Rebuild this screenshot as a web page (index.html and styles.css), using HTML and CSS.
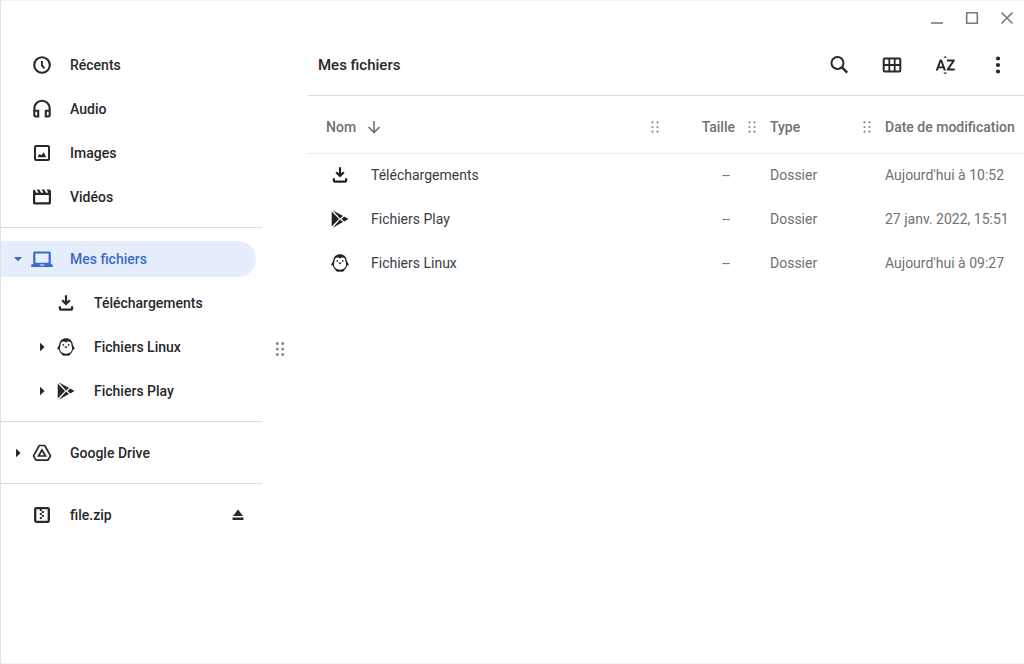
FILE: index.html
```html
<!DOCTYPE html>
<html lang="fr">
<head>
<meta charset="utf-8">
<title>Mes fichiers</title>
<link rel="stylesheet" href="styles.css">
</head>
<body>
<svg class="sprite" aria-hidden="true">
  <symbol id="clock" viewBox="0 0 24 24"><circle cx="12" cy="12" r="7.800" fill="none" stroke="currentColor" stroke-width="2.100"/><path d="M11.900 8v4.400l2.500 2.900" fill="none" stroke="currentColor" stroke-width="1.900"/></symbol>
  <symbol id="headphones" viewBox="0 0 24 24"><path d="M4.300 14v-2.500a7.700 7.700 0 0 1 15.400 0V14M4.300 13.800h3.900v5.700H6a1.700 1.700 0 0 1-1.700-1.700zM19.700 13.800h-3.900v5.700H18a1.700 1.700 0 0 0 1.700-1.700z" fill="none" stroke="currentColor" stroke-width="2.100"/></symbol>
  <symbol id="image" viewBox="0 0 24 24"><rect x="5" y="5" width="14" height="14" rx="1" fill="none" stroke="currentColor" stroke-width="2"/><path d="M8 16.200v-1.500l1.800-1.700 1.600 1.200 2.300-3 2.500 5z"/></symbol>
  <symbol id="film" viewBox="0 0 24 24"><path d="M4.500 4.500l1.700 3.300h2.300L6.800 4.500h2.600l1.700 3.300h2.300L11.700 4.500h2.600L16 7.800h2.300L16.600 4.500h2.600C20.200 4.500 21 5.300 21 6.300v11.400c0 1-.8 1.800-1.800 1.800H4.800c-1 0-1.800-.8-1.800-1.800V6.300C3 5.300 3.500 4.700 4.500 4.500zM5.200 10v7.300h13.600V10z" fill-rule="evenodd"/></symbol>
  <symbol id="laptop" viewBox="0 0 24 24"><path d="M4.700 4.500h14.600c.8 0 1.500.7 1.500 1.500v11.200h1.900V20H1.300v-2.800h1.900V6c0-.8.700-1.500 1.500-1.500zM5.400 6.500v9.200h13.200V6.500zM9.700 17.500v1h4.600v-1z" fill-rule="evenodd"/></symbol>
  <symbol id="download" viewBox="0 0 24 24"><path d="M12 4.300v8.200M8.200 9.200l3.800 3.800 3.800-3.800M5.900 15.300v2.400c0 .6.400 1 1 1h10.200c.6 0 1-.4 1-1v-2.400" fill="none" stroke="currentColor" stroke-width="2.200"/></symbol>
  <symbol id="penguin" viewBox="0 0 24 24"><path d="M12 3.300c-3.700 0-6.200 2.300-6.700 5.700-.2 1.800-1.700 3-2.300 5.300 1 0 1.600 0 2 .5.300 1.700 1.200 3.200 2.600 4.200.6 1.900 2.600 2 4.400 1.400 1.800.6 3.800.5 4.400-1.400 1.400-1 2.300-2.500 2.600-4.200.4-.5 1-.5 2-.5-.6-2.300-2.100-3.500-2.300-5.300C18.200 5.600 15.700 3.300 12 3.300zM9.500 6.500c1.100 0 2 .5 2.500 1.300.5-.8 1.400-1.300 2.500-1.300 2 0 3 1.600 3 3.700 0 1.200.6 1.900.6 3.300 0 3.100-2.500 5.200-6.100 5.200s-6.100-2.100-6.100-5.200c0-1.400.6-2.100.6-3.300 0-2.100 1-3.700 3-3.700z" fill-rule="evenodd"/><path d="M10.200 11.500h3.600L12 13.600z"/><circle cx="9.300" cy="9.800" r=".9"/><circle cx="14.700" cy="9.800" r=".9"/></symbol>
  <symbol id="play" viewBox="0 0 24 24"><path d="M3.700 4.500v15L11 12zM4.800 3.200L15 9l-3 2.500zM4.800 20.800L15 15l-3-2.500zM16.200 9.500l4.300 2.500-4.300 2.500L13.500 12z"/></symbol>
  <symbol id="drive" viewBox="0 0 24 24"><path d="M9.300 4.500h5.400l5.800 10.300-2.500 4.300H6l-2.500-4.300z" fill="none" stroke="currentColor" stroke-width="1.700" stroke-linejoin="round"/><path d="M12 9l3.500 6h-7z" fill="none" stroke="currentColor" stroke-width="1.700"/></symbol>
  <symbol id="zip" viewBox="0 0 24 24"><rect x="5.200" y="5.200" width="13.600" height="13.600" rx="1" fill="none" stroke="currentColor" stroke-width="2.300"/><path d="M9.800 6h2v2h-2zM11.800 8h2v2h-2zM9.800 10h2v2h-2zM11.800 12h2v2h-2zM9.800 14h2v2h-2z"/></symbol>
  <symbol id="dots" viewBox="0 0 8 12"><circle cx="1.500" cy="1.300" r="1.100"/><circle cx="6.500" cy="1.300" r="1.100"/><circle cx="1.500" cy="6" r="1.100"/><circle cx="6.500" cy="6" r="1.100"/><circle cx="1.500" cy="10.700" r="1.100"/><circle cx="6.500" cy="10.700" r="1.100"/></symbol>
  <symbol id="large-dots" viewBox="0 0 10 16"><circle cx="2.300" cy="2.500" r="1.500"/><circle cx="7.700" cy="2.500" r="1.500"/><circle cx="2.300" cy="8" r="1.500"/><circle cx="7.700" cy="8" r="1.500"/><circle cx="2.300" cy="13.500" r="1.500"/><circle cx="7.700" cy="13.500" r="1.500"/></symbol>
  <symbol id="arrow-right" viewBox="0 0 10 10"><path d="M3 .8L7.600 5 3 9.200z"/></symbol>
  <symbol id="arrow-down" viewBox="0 0 10 10"><path d="M.8 3h8.400L5 7.200z"/></symbol>
</svg>

<div class="window">
  <header class="titlebar">
    <button class="window-button" aria-label="Réduire"><svg viewBox="0 0 16 16"><path d="M2 13h12"/></svg></button>
    <button class="window-button" aria-label="Agrandir"><svg viewBox="0 0 16 16"><path d="M2.700 2.700h10.600v10.600H2.700z"/></svg></button>
    <button class="window-button" aria-label="Fermer"><svg viewBox="0 0 16 16"><path d="M2.500 2.500l11 11M13.500 2.500l-11 11"/></svg></button>
  </header>

  <div class="body">
    <nav class="sidebar" aria-label="Emplacements">
      <ul class="group">
        <li class="place"><span class="expander"></span><button class="entry"><svg class="icon"><use href="#clock"/></svg>Récents</button></li>
        <li class="place"><span class="expander"></span><button class="entry"><svg class="icon"><use href="#headphones"/></svg>Audio</button></li>
        <li class="place"><span class="expander"></span><button class="entry"><svg class="icon"><use href="#image"/></svg>Images</button></li>
        <li class="place"><span class="expander"></span><button class="entry"><svg class="icon"><use href="#film"/></svg>Vidéos</button></li>
      </ul>
      <ul class="group">
        <li class="place selected"><button class="expander" aria-label="Replier Mes fichiers"><svg class="arrow"><use href="#arrow-down"/></svg></button><button class="entry" aria-current="true"><svg class="icon"><use href="#laptop"/></svg>Mes fichiers</button></li>
        <li class="place nested"><span class="expander"></span><button class="entry"><svg class="icon"><use href="#download"/></svg>Téléchargements</button></li>
        <li class="place nested"><button class="expander" aria-label="Déplier Fichiers Linux"><svg class="arrow"><use href="#arrow-right"/></svg></button><button class="entry"><svg class="icon"><use href="#penguin"/></svg>Fichiers Linux</button></li>
        <li class="place nested"><button class="expander" aria-label="Déplier Fichiers Play"><svg class="arrow"><use href="#arrow-right"/></svg></button><button class="entry"><svg class="icon"><use href="#play"/></svg>Fichiers Play</button></li>
      </ul>
      <ul class="group">
        <li class="place"><button class="expander" aria-label="Déplier Google Drive"><svg class="arrow"><use href="#arrow-right"/></svg></button><button class="entry"><svg class="icon"><use href="#drive"/></svg>Google Drive</button></li>
      </ul>
      <ul class="group">
        <li class="place"><span class="expander"></span><button class="entry"><svg class="icon"><use href="#zip"/></svg>file.zip</button><button class="eject" aria-label="Éjecter file.zip"><svg viewBox="0 0 14 14"><path d="M7 1.500l5 6.500H2zM1.500 9.500h11V12h-11z"/></svg></button></li>
      </ul>
    </nav>

    <div class="splitter"><svg class="splitter-dots"><use href="#large-dots"/></svg></div>

    <main class="content">
      <header class="toolbar">
        <h1 class="title">Mes fichiers</h1>
        <button class="tool" aria-label="Rechercher"><svg viewBox="0 0 24 24"><circle cx="10.500" cy="10" r="6" fill="none" stroke="currentColor" stroke-width="2"/><path d="M14.700 14.200l5.500 5.500" fill="none" stroke="currentColor" stroke-width="2.400"/></svg></button>
        <button class="tool" aria-label="Vue en grille"><svg viewBox="0 0 24 24"><rect x="3.700" y="5.500" width="16.600" height="13" rx="1" fill="none" stroke="currentColor" stroke-width="2"/><path d="M9.300 5v14M14.700 5v14M3 12h18" fill="none" stroke="currentColor" stroke-width="1.800"/></svg></button>
        <button class="tool" aria-label="Trier"><svg viewBox="0 0 24 24"><path d="M10.300 4.800h3.800L12.200 2.900zM10.300 19.400h3.800l-1.900 1.900z"/><path d="M6.800 6.500h2.100l4.100 11h-2.200l-.8-2.300H5.700l-.8 2.300H2.700zM7.850 9.100l-1.500 4.300h3zM14 6.500h7.700v1.500l-5.200 7.600h5.300v1.900H13.800V16l5.200-7.600h-5z" fill-rule="evenodd"/></svg></button>
        <button class="tool" aria-label="Plus"><svg viewBox="0 0 24 24"><circle cx="12" cy="5.500" r="2.100"/><circle cx="12" cy="12" r="2.100"/><circle cx="12" cy="18.500" r="2.100"/></svg></button>
      </header>

      <table class="files">
        <colgroup><col><col class="col-size"><col class="col-type"><col class="col-date"></colgroup>
        <thead>
          <tr>
            <th scope="col" aria-sort="ascending"><div class="heading name-heading">Nom <svg class="sort-arrow" viewBox="0 0 14 14"><path d="M7 1v11.500M1.500 7L7 12.500 12.500 7"/></svg><svg class="grip"><use href="#dots"/></svg></div></th>
            <th scope="col"><div class="heading size-heading">Taille<svg class="grip"><use href="#dots"/></svg></div></th>
            <th scope="col"><div class="heading">Type<svg class="grip"><use href="#dots"/></svg></div></th>
            <th scope="col"><div class="heading">Date de modification</div></th>
          </tr>
        </thead>
        <tbody>
          <tr><td><div class="file"><svg class="icon"><use href="#download"/></svg>Téléchargements</div></td><td class="size">--</td><td>Dossier</td><td>Aujourd'hui à 10:52</td></tr>
          <tr><td><div class="file"><svg class="icon"><use href="#play"/></svg>Fichiers Play</div></td><td class="size">--</td><td>Dossier</td><td>27 janv. 2022, 15:51</td></tr>
          <tr><td><div class="file"><svg class="icon"><use href="#penguin"/></svg>Fichiers Linux</div></td><td class="size">--</td><td>Dossier</td><td>Aujourd'hui à 09:27</td></tr>
        </tbody>
      </table>
    </main>
  </div>
</div>
</body>
</html>
```
FILE: styles.css
```css
* { box-sizing: border-box; }

body {
  margin: 0;
  background: #fff;
  color: #27282b;
  font: 500 14px/20px Roboto, "Liberation Sans", sans-serif;
}

button {
  padding: 0;
  border: 0;
  background: none;
  color: inherit;
  font: inherit;
}

svg { display: block; flex: none; fill: currentColor; }

.sprite { display: none; }

.window {
  display: flex;
  flex-direction: column;
  min-height: 100vh;
  border: 1px solid #f1f1f1;
  border-left-color: #e2e2e2;
  border-right: 0;
}

.titlebar { display: flex; justify-content: flex-end; height: 34px; }

.window-button {
  display: grid;
  place-items: center;
  width: 35px;
  color: #77797c;
}

.window-button svg {
  width: 16px;
  height: 16px;
  fill: none;
  stroke: currentColor;
  stroke-width: 1.6;
}

.body { display: flex; flex: 1; }

.sidebar { flex: 0 0 261px; padding-top: 8px; }

.group {
  display: flex;
  flex-direction: column;
  gap: 8px;
  margin: 0;
  padding: 4px 6px 12px 0;
  list-style: none;
}

.group + .group { padding-top: 13px; border-top: 1px solid #dadce0; }

.place {
  display: flex;
  align-items: center;
  height: 36px;
  padding-left: 5px;
  border-radius: 0 18px 18px 0;
}

.nested { padding-left: 29px; }

.selected { background: #e6eefe; color: #3b6bc6; }

.expander { display: grid; place-items: center; flex: none; width: 24px; height: 24px; }

.arrow { width: 10px; height: 10px; }

.icon { width: 24px; height: 24px; }

.entry { display: flex; flex: 1; align-items: center; gap: 16px; height: 36px; text-align: left; }

.eject { display: grid; place-items: center; width: 36px; height: 36px; }

.eject svg { width: 14px; height: 14px; }

.splitter { display: grid; flex: 0 0 46px; place-items: center start; padding-left: 13px; color: #85888c; }

.splitter-dots { width: 10px; height: 16px; }

.content { flex: 1; min-width: 0; }

.toolbar {
  display: flex;
  align-items: center;
  gap: 17px;
  height: 61px;
  padding: 0 8px 0 10px;
  border-bottom: 1px solid #dadce0;
}

.title { flex: 1; margin: 0; font-size: 15px; font-weight: 500; }

.tool { display: grid; place-items: center; width: 36px; height: 36px; }

.tool svg { width: 24px; height: 24px; }

.files { width: 100%; border-collapse: collapse; table-layout: fixed; }

.col-size { width: 97px; }

.col-type { width: 115px; }

.col-date { width: 152px; }

.files th {
  height: 57px;
  padding: 6px 0 0;
  border-bottom: 1px solid #ececed;
  color: #6f7175;
  font-weight: 500;
  text-align: left;
}

.heading { display: flex; align-items: center; padding-left: 13px; white-space: nowrap; }

.name-heading { gap: 11px; padding-left: 18px; }

.size-heading { justify-content: flex-end; gap: 13px; padding-left: 0; }

.sort-arrow { width: 14px; height: 14px; fill: none; stroke: currentColor; stroke-width: 1.6; }

.grip { width: 8px; height: 12px; margin-right: 1px; color: #85888c; }

.heading:not(.size-heading) .grip { margin-left: auto; }

.files td {
  height: 44px;
  padding: 0 0 0 13px;
  color: #6f7175;
  font-weight: 400;
  white-space: nowrap;
}

.files td:first-child { padding-left: 20px; color: #3a3c3f; }

.files .size { padding-right: 27px; text-align: right; }

.file { display: flex; align-items: center; gap: 19px; }

.file .icon { color: #202124; }
```
